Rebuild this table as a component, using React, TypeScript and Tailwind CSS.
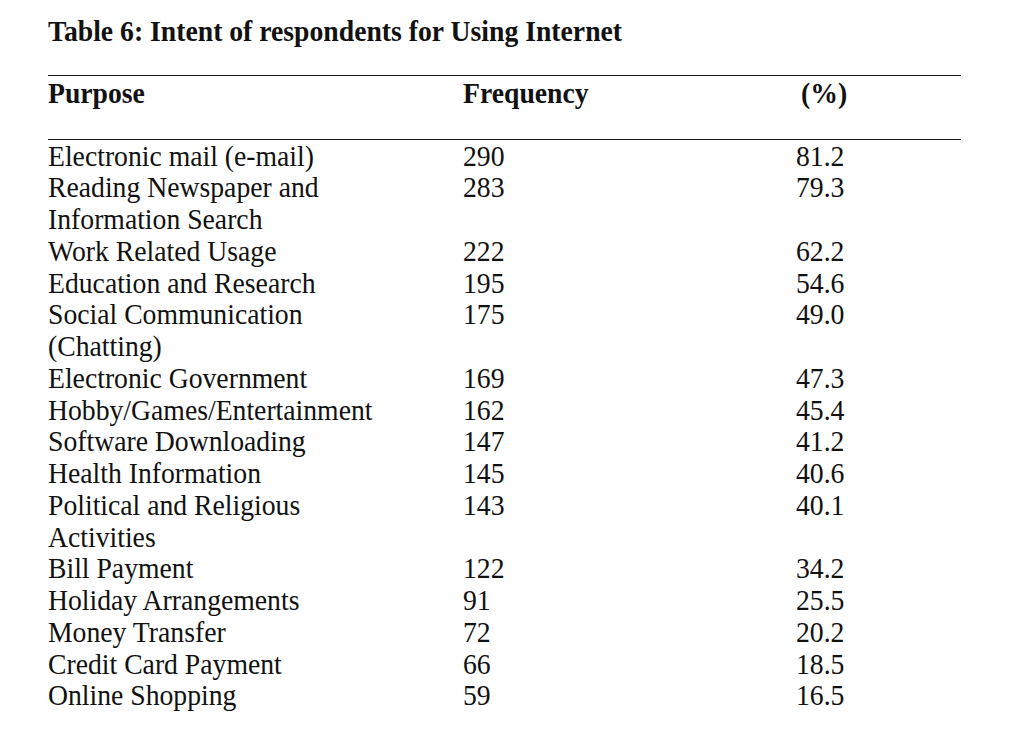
const rows: [string[], string, string][] = [
  [["Electronic mail (e-mail)"], "290", "81.2"],
  [["Reading Newspaper and", "Information Search"], "283", "79.3"],
  [["Work Related Usage"], "222", "62.2"],
  [["Education and Research"], "195", "54.6"],
  [["Social Communication", "(Chatting)"], "175", "49.0"],
  [["Electronic Government"], "169", "47.3"],
  [["Hobby/Games/Entertainment"], "162", "45.4"],
  [["Software Downloading"], "147", "41.2"],
  [["Health Information"], "145", "40.6"],
  [["Political and Religious", "Activities"], "143", "40.1"],
  [["Bill Payment"], "122", "34.2"],
  [["Holiday Arrangements"], "91", "25.5"],
  [["Money Transfer"], "72", "20.2"],
  [["Credit Card Payment"], "66", "18.5"],
  [["Online Shopping"], "59", "16.5"],
];

// the scanned table is slightly taller than it is wide, so stretch glyphs up from the baseline
function Line({ children }: { children: React.ReactNode }) {
  return <div className="origin-[0_25px] scale-y-[1.08]">{children}</div>;
}

export default function App() {
  return (
    <div className="min-h-[732px] w-[1022px] bg-white pl-[48px] pt-[15.5px] text-[27.7px] leading-[31.75px] text-[#111] [font-family:'Liberation_Serif','Times_New_Roman',serif]">
      <h1 className="font-bold">
        <Line>Table 6: Intent of respondents for Using Internet</Line>
      </h1>

      <div className="mt-[28px] h-px w-[913px] bg-[#222]" />

      <div className="mt-[1.5px] grid grid-cols-[415px_338px_1fr] font-bold">
        <Line>Purpose</Line>
        <Line>Frequency</Line>
        <Line>(%)</Line>
      </div>

      <div className="mt-[29.5px] h-px w-[913px] bg-[#222]" />

      <div className="mt-[0.5px]">
        {rows.map(([purpose, freq, pct]) => (
          <div key={purpose[0]} className="grid grid-cols-[415px_333px_1fr]">
            <div>
              {purpose.map((line) => (
                <Line key={line}>{line}</Line>
              ))}
            </div>
            <Line>{freq}</Line>
            <Line>{pct}</Line>
          </div>
        ))}
      </div>
    </div>
  );
}
